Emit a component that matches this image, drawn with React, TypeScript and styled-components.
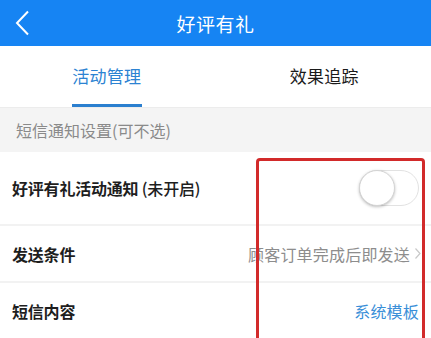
import React from "react";
import styled, { createGlobalStyle } from "styled-components";

const Global = createGlobalStyle`
  html, body { margin: 0; padding: 0; background: #fff; }
  body { font-family: "Noto Sans CJK SC", "Noto Sans", sans-serif; }
  *, *::before, *::after { box-sizing: border-box; }
`;

const Page = styled.div`
  position: relative;
  width: 431px;
  height: 338px;
  overflow: hidden;
  background: #fff;
`;

const Header = styled.header`
  height: 46px;
  background: #1684f3;
  display: flex;
  align-items: center;
  justify-content: center;
  position: relative;
`;

const Back = styled.svg`
  position: absolute;
  left: 15px;
  top: 10px;
`;

const Title = styled.h1`
  margin: 0;
  color: #fff;
  font-size: 19px;
  font-weight: 400;
  letter-spacing: 0.5px;
`;

const Tabs = styled.nav`
  height: 62px;
  display: grid;
  grid-template-columns: 1fr 1fr;
  border-bottom: 1px solid #ececec;
`;

const Tab = styled.div<{ $active?: boolean }>`
  display: flex;
  justify-content: center;
  align-items: center;
  padding-bottom: 2px;
  span {
    font-size: 17px;
    letter-spacing: 0.3px;
    color: ${(p) => (p.$active ? "#2c83d2" : "#1a1a1a")};
    transform: translateX(${(p) => (p.$active ? "-1px" : "1px")});
  }
`;

const Underline = styled.i`
  position: absolute;
  left: 72px;
  top: 104px;
  width: 70px;
  height: 3px;
  background: #2b7fcf;
`;

const SectionHeader = styled.div`
  height: 44px;
  background: #f4f4f4;
  display: flex;
  align-items: center;
  padding-left: 16px;
  font-size: 16px;
  color: #8a8a8a;
`;

const Row = styled.div<{ $h: number }>`
  height: ${(p) => p.$h}px;
  display: flex;
  align-items: center;
  justify-content: space-between;
  padding: 0 12px;
  border-bottom: 2px solid #f2f2f2;
`;

const Label = styled.span`
  font-size: 16px;
  color: #1e1e1e;
  font-weight: 700;
  letter-spacing: -0.2px;
  em {
    font-style: normal;
    font-weight: 500;
  }
`;

const Value = styled.span<{ $blue?: boolean }>`
  font-size: 16px;
  letter-spacing: 0.2px;
  color: ${(p) => (p.$blue ? "#3a8fd8" : "#8d8d8d")};
  display: flex;
  align-items: center;
  gap: 5px;
`;

const Chevron = styled.svg`
  margin-right: -2px;
`;

const Switch = styled.div`
  width: 60px;
  height: 36px;
  border-radius: 18px;
  border: 1px solid #e2e2e2;
  background: #fff;
  position: relative;
  &::after {
    content: "";
    position: absolute;
    left: -1px;
    top: -1px;
    width: 36px;
    height: 36px;
    border-radius: 50%;
    background: #fff;
    border: 1px solid #d4d4d4;
    box-shadow: 0 1px 3px rgba(0, 0, 0, 0.25);
  }
`;

const Mark = styled.div`
  position: absolute;
  left: 256px;
  top: 158px;
  width: 169px;
  height: 200px;
  border: 3px solid #d22a2a;
  border-radius: 4px;
  pointer-events: none;
`;

export default function App() {
  return (
    <Page>
      <Global />
      <Header>
        <Back width="16" height="26" viewBox="0 0 16 26">
          <path d="M13 1.5 L2 13 L13 24.5" fill="none" stroke="#fff" strokeWidth="2" />
        </Back>
        <Title>好评有礼</Title>
      </Header>
      <Tabs>
        <Tab $active>
          <span>活动管理</span>
        </Tab>
        <Tab>
          <span>效果追踪</span>
        </Tab>
      </Tabs>
      <Underline />
      <SectionHeader>短信通知设置(可不选)</SectionHeader>
      <Row $h={74}>
        <Label>
          好评有礼活动通知 <em>(未开启)</em>
        </Label>
        <Switch />
      </Row>
      <Row $h={57}>
        <Label>发送条件</Label>
        <Value>
          顾客订单完成后即发送
          <Chevron width="6" height="11" viewBox="0 0 6 11">
            <path d="M0.5 0.5 L5 5.5 L0.5 10.5" fill="none" stroke="#c8c8c8" strokeWidth="1.2" />
          </Chevron>
        </Value>
      </Row>
      <Row $h={58}>
        <Label>短信内容</Label>
        <Value $blue>系统模板</Value>
      </Row>
      <Mark />
    </Page>
  );
}
